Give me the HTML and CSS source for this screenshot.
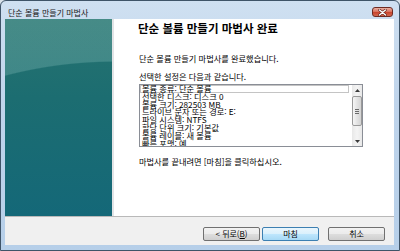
FILE: index.html
```html
<!DOCTYPE html>
<html lang="ko">
<head>
<meta charset="utf-8">
<title>단순 볼륨 만들기 마법사</title>
<link rel="stylesheet" href="styles.css">
</head>
<body>
<div class="window">
  <div class="titlebar">
    <span class="title">단순 볼륨 만들기 마법사</span>
    <span class="close">
      <svg width="9" height="7" viewBox="0 0 9 7"><path d="M1.5 1 L7.5 6 M7.5 1 L1.5 6" stroke="#5a1d16" stroke-width="2.6" stroke-linecap="round"/><path d="M1.5 1 L7.5 6 M7.5 1 L1.5 6" stroke="#ffffff" stroke-width="1.5" stroke-linecap="round"/></svg>
    </span>
  </div>
  <div class="client">
    <div class="main">
      <div class="side"></div>
      <div class="content">
        <div class="heading">단순 볼륨 만들기 마법사 완료</div>
        <div class="text line1">단순 볼륨 만들기 마법사를 완료했습니다.</div>
        <div class="text line2">선택한 설정은 다음과 같습니다.</div>
        <div class="listbox">
          <div class="items">
            <div class="item focus">볼륨 종류: 단순 볼륨</div>
            <div class="item">선택한 디스크: 디스크 0</div>
            <div class="item">볼륨 크기: 282503 MB</div>
            <div class="item">드라이브 문자 또는 경로: E:</div>
            <div class="item">파일 시스템: NTFS</div>
            <div class="item">할당 단위 크기: 기본값</div>
            <div class="item">볼륨 레이블: 새 볼륨</div>
            <div class="item">빠른 포맷: 예</div>
          </div>
          <div class="scrollbar">
            <div class="arrow up"><svg width="5" height="3" viewBox="0 0 5 3"><path d="M0 3 L2.5 0 L5 3 Z" fill="#3a3a3a"/></svg></div>
            <div class="track">
              <div class="thumb"><span class="grip"></span><span class="grip"></span><span class="grip"></span></div>
            </div>
            <div class="arrow down"><svg width="5" height="3" viewBox="0 0 5 3"><path d="M0 0 L2.5 3 L5 0 Z" fill="#3a3a3a"/></svg></div>
          </div>
        </div>
        <div class="text line3">마법사를 끝내려면 [마침]을 클릭하십시오.</div>
      </div>
    </div>
    <div class="footer">
      <button class="btn">&lt; 뒤로(<u>B</u>)</button>
      <button class="btn default">마침</button>
      <button class="btn cancel">취소</button>
    </div>
  </div>
</div>
</body>
</html>
```

FILE: styles.css
```css
* { box-sizing: border-box; }
html, body {
  margin: 0;
  padding: 0;
  width: 400px;
  height: 251px;
  overflow: hidden;
  background: #d9e2ea;
  font-family: "Noto Sans CJK KR", "Noto Sans", sans-serif;
}
.window {
  width: 400px;
  height: 251px;
  border: 1px solid #3f5468;
  border-radius: 6px 6px 0 0;
  background: linear-gradient(to bottom, #cfe0f1 0%, #c0d5ec 40%, #b6cfe9 100%);
  display: flex;
  flex-direction: column;
}
.titlebar {
  height: 18px;
  display: flex;
  align-items: flex-start;
  padding: 6px 6px 0 7px;
}
.title {
  font-size: 8px;
  line-height: 12px;
  color: #1a1a1a;
}
.close {
  margin-left: auto;
  width: 21px;
  height: 10px;
  border: 1px solid #6e2b22;
  border-radius: 3px;
  background: linear-gradient(to bottom, #eab0a2 0%, #d9735f 45%, #c8452e 55%, #d4664c 100%);
  display: flex;
  align-items: center;
  justify-content: center;
}
.close svg { display: block; }
.client {
  margin: 0 5px 5px 4px;
  height: 226px;
  display: flex;
  flex-direction: column;
}
.main {
  height: 197px;
  display: flex;
  background: #ffffff;
}
.side {
  width: 109px;
  border-right: 2px solid #e2e4e6;
  background:
    radial-gradient(ellipse 363px 300px at 110px 342px, rgba(255,255,255,0) 99.6%, rgba(180,225,220,0.22) 100%),
    linear-gradient(to bottom, #27736f 0%, #1c6d71 40%, #146878 100%);
}
.content {
  flex: 1;
  padding-left: 25px;
  display: flex;
  flex-direction: column;
  align-items: flex-start;
  color: #000;
}
.heading {
  margin-top: 2px;
  margin-left: -1px;
  font-size: 11.5px;
  font-weight: bold;
  line-height: 14px;
}
.text {
  font-size: 8.2px;
  line-height: 10px;
}
.line1 { margin-top: 18px; }
.line2 { margin-top: 8px; }
.line3 { margin-top: 9px; }
.listbox {
  margin-top: 3px;
  width: 224px;
  height: 63px;
  border: 1px solid #8a8e96;
  display: flex;
  background: #fff;
}
.items {
  flex: 1;
  overflow: hidden;
  padding-top: 0;
}
.item {
  font-size: 8.2px;
  line-height: 7.8px;
  height: 7.8px;
  padding-left: 2px;
  white-space: nowrap;
}
.item.focus {
  margin-right: 3px;
  box-shadow: inset 0 0 0 1px #c4c4c4;
}
.scrollbar {
  width: 10px;
  display: flex;
  flex-direction: column;
  background: linear-gradient(to right, #e8e8e8, #f4f4f4 50%, #e8e8e8);
}
.arrow {
  height: 10px;
  display: flex;
  align-items: center;
  justify-content: center;
}
.arrow svg { display: block; }
.track {
  flex: 1;
  padding: 1px 0;
}
.thumb {
  height: 30px;
  margin: 0 0 0 0;
  border: 1px solid #9a9a9a;
  border-radius: 2px;
  background: linear-gradient(to right, #f6f6f6, #e4e4e4 50%, #d4d4d4);
  display: flex;
  flex-direction: column;
  align-items: center;
  justify-content: center;
  gap: 1px;
}
.grip {
  display: block;
  width: 4px;
  height: 1px;
  background: #6a6a6a;
}
.footer {
  height: 29px;
  border-top: 1px solid #b9b9b9;
  background: #f0f0f0;
  display: flex;
  justify-content: flex-end;
  align-items: flex-start;
  padding: 10px 9px 0 0;
}
.btn {
  width: 57px;
  height: 14px;
  margin: 0;
  padding: 0;
  border: 1px solid #707070;
  border-radius: 2px;
  background: linear-gradient(to bottom, #f2f2f2 0%, #ebebeb 50%, #dddddd 51%, #cfcfcf 100%);
  font-family: "Noto Sans CJK KR", "Noto Sans", sans-serif;
  font-size: 8px;
  line-height: 12px;
  color: #000;
  text-align: center;
}
.btn u { text-decoration: underline; }
.btn.default {
  margin-left: 2px;
  border-color: #3c7fb1;
  background: linear-gradient(to bottom, #eaf6fd 0%, #d9f0fc 50%, #bee6fd 51%, #a7d9f5 100%);
}
.btn.cancel { margin-left: 9px; }
```
